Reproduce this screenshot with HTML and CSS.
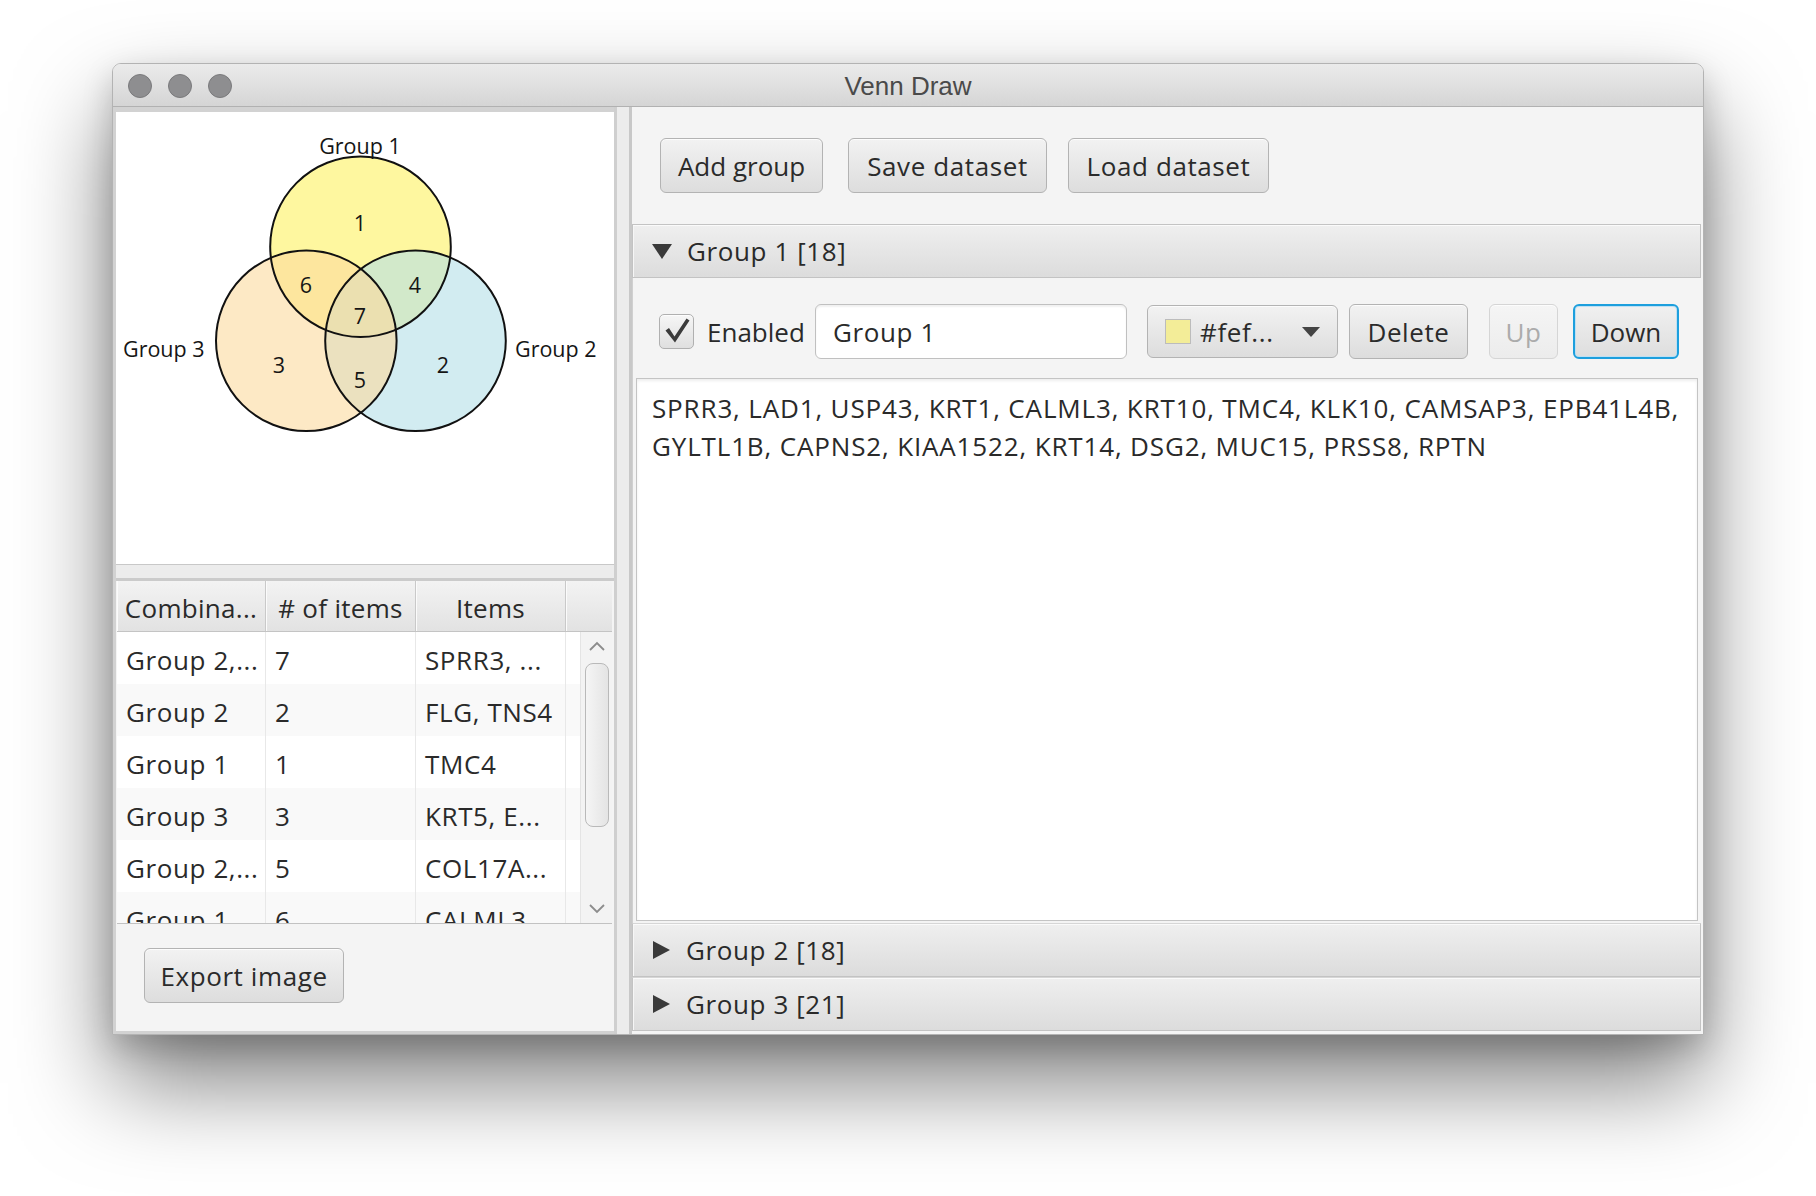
FILE: index.html
```html
<!DOCTYPE html>
<html>
<head>
<meta charset="utf-8">
<title>Venn Draw</title>
<link rel="stylesheet" href="styles.css">
</head>
<body>
<div class="stage">
  <div class="window">
    <div class="titlebar">
      <div class="lights">
        <span class="light"></span><span class="light"></span><span class="light"></span>
      </div>
      <div class="title">Venn Draw</div>
    </div>
    <div class="content">
      <div class="left">
        <div class="venn-pane">
          <svg class="venn" width="498" height="452" viewBox="0 0 498 452">
            <circle cx="244.5" cy="134.7" r="90.3" fill="#fef15f" fill-opacity="0.6"/>
            <circle cx="299.5" cy="228.8" r="90.3" fill="#b4dfe7" fill-opacity="0.6"/>
            <circle cx="190.3" cy="228.8" r="90.3" fill="#fcdb9f" fill-opacity="0.6"/>
            <circle cx="244.5" cy="134.7" r="90.3" fill="none" stroke="#111" stroke-width="2"/>
            <circle cx="299.5" cy="228.8" r="90.3" fill="none" stroke="#111" stroke-width="2"/>
            <circle cx="190.3" cy="228.8" r="90.3" fill="none" stroke="#111" stroke-width="2"/>
            <g class="vlabel">
              <text x="244" y="42" text-anchor="middle">Group 1</text>
              <text x="7" y="245">Group 3</text>
              <text x="399" y="245">Group 2</text>
              <text x="244" y="119" text-anchor="middle">1</text>
              <text x="190" y="181" text-anchor="middle">6</text>
              <text x="299" y="181" text-anchor="middle">4</text>
              <text x="244" y="212" text-anchor="middle">7</text>
              <text x="163" y="261" text-anchor="middle">3</text>
              <text x="327" y="261" text-anchor="middle">2</text>
              <text x="244" y="276" text-anchor="middle">5</text>
            </g>
          </svg>
        </div>
        <div class="hdivider"></div>
        <div class="lower">
          <div class="table">
            <div class="thead">
              <div class="th c1">Combina...</div>
              <div class="th c2"># of items</div>
              <div class="th c3">Items</div>
              <div class="th c4"></div>
            </div>
            <div class="tbody">
              <div class="rows">
                <div class="row"><div class="td c1">Group 2,...</div><div class="td c2">7</div><div class="td c3">SPRR3, ...</div><div class="td cf"></div></div>
                <div class="row alt"><div class="td c1">Group 2</div><div class="td c2">2</div><div class="td c3">FLG, TNS4</div><div class="td cf"></div></div>
                <div class="row"><div class="td c1">Group 1</div><div class="td c2">1</div><div class="td c3">TMC4</div><div class="td cf"></div></div>
                <div class="row alt"><div class="td c1">Group 3</div><div class="td c2">3</div><div class="td c3">KRT5, E...</div><div class="td cf"></div></div>
                <div class="row"><div class="td c1">Group 2,...</div><div class="td c2">5</div><div class="td c3">COL17A...</div><div class="td cf"></div></div>
                <div class="row alt"><div class="td c1">Group 1</div><div class="td c2">6</div><div class="td c3">CALML3</div><div class="td cf"></div></div>
              </div>
              <div class="vscroll">
                <div class="sarrow"><svg width="16" height="10" viewBox="0 0 16 10"><polyline points="1,9 8,2 15,9" fill="none" stroke="#8c8c8c" stroke-width="1.8"/></svg></div>
                <div class="strack"><div class="thumb"></div></div>
                <div class="sarrow"><svg width="16" height="10" viewBox="0 0 16 10"><polyline points="1,1 8,8 15,1" fill="none" stroke="#8c8c8c" stroke-width="1.8"/></svg></div>
              </div>
            </div>
          </div>
          <div class="export-bar">
            <button class="btn export">Export image</button>
          </div>
        </div>
      </div>
      <div class="vdivider"></div>
      <div class="right">
        <div class="toolbar">
          <button class="btn add">Add group</button>
          <button class="btn save">Save dataset</button>
          <button class="btn load">Load dataset</button>
        </div>
        <div class="accordion">
          <div class="tp-head">
            <svg class="arrow-down" width="20" height="15" viewBox="0 0 20 15"><polygon points="0,0 20,0 10,15" fill="#3a3a3a"/></svg>
            <span>Group 1 [18]</span>
          </div>
          <div class="tp-content">
            <div class="controls">
              <div class="checkbox">
                <svg width="35" height="35" viewBox="0 0 35 35"><path d="M6.5 16.5 L10 14 L15.5 22.5 L27.5 4.5 L30.5 6.5 L16 28.5 Z" fill="#3b3b3b"/></svg>
              </div>
              <div class="cb-label">Enabled</div>
              <div class="textfield">Group 1</div>
              <div class="btn colorpicker">
                <span class="swatch"></span>
                <span class="cp-text">#fef...</span>
                <svg class="cp-arrow" width="18" height="10" viewBox="0 0 18 10"><polygon points="0,0 18,0 9,10" fill="#444"/></svg>
              </div>
              <button class="btn delete">Delete</button>
              <button class="btn up" disabled>Up</button>
              <button class="btn down">Down</button>
            </div>
            <div class="textarea">SPRR3, LAD1, USP43, KRT1, CALML3, KRT10, TMC4, KLK10, CAMSAP3, EPB41L4B,<br>GYLTL1B, CAPNS2, KIAA1522, KRT14, DSG2, MUC15, PRSS8, RPTN</div>
          </div>
          <div class="tp-head collapsed">
            <svg class="arrow-right" width="17" height="18" viewBox="0 0 17 18"><polygon points="0,0 17,9 0,18" fill="#3a3a3a"/></svg>
            <span>Group 2 [18]</span>
          </div>
          <div class="tp-head collapsed last">
            <svg class="arrow-right" width="17" height="18" viewBox="0 0 17 18"><polygon points="0,0 17,9 0,18" fill="#3a3a3a"/></svg>
            <span>Group 3 [21]</span>
          </div>
        </div>
      </div>
    </div>
  </div>
</div>
</body>
</html>
```

FILE: styles.css
```css
* { box-sizing: border-box; }

html, body {
  margin: 0;
  padding: 0;
  background: #ffffff;
  width: 1816px;
  height: 1196px;
  overflow: hidden;
  font-family: "Open Sans", "Noto Sans", sans-serif;
  letter-spacing: 0.6px;
}

.stage {
  padding: 63px 0 0 112px;
}

.window {
  width: 1592px;
  height: 972px;
  border: 1px solid #b3b3b3;
  border-radius: 9px 9px 0 0;
  background: #f4f4f4;
  box-shadow: 0 48px 95px rgba(0, 0, 0, 0.5), 0 12px 30px rgba(0, 0, 0, 0.18);
  display: flex;
  flex-direction: column;
  overflow: hidden;
}

/* title bar */
.titlebar {
  height: 43px;
  flex: 0 0 43px;
  border-bottom: 1px solid #b1b1b1;
  background: linear-gradient(#ebebeb, #d5d5d5);
  display: flex;
  align-items: center;
  position: relative;
}

.lights {
  display: flex;
  gap: 16px;
  padding: 1px 0 0 15px;
}

.light {
  width: 24px;
  height: 24px;
  border-radius: 50%;
  background: #8e8e90;
  border: 1px solid #7a7a7c;
}

.title {
  position: absolute;
  left: 0;
  right: 0;
  top: 2px;
  bottom: 0;
  display: flex;
  align-items: center;
  justify-content: center;
  font-family: "Liberation Sans", Arial, sans-serif;
  font-size: 26px;
  letter-spacing: 0;
  color: #4a4a4a;
}

.content {
  display: flex;
  height: 927px;
}

/* left side */
.left {
  width: 501px;
  flex: 0 0 501px;
  padding: 5px 0 3px 3px;
  background: #d2d2d2;
  display: flex;
  flex-direction: column;
}

.venn-pane {
  height: 453px;
  flex: 0 0 453px;
  background: #ffffff;
  border-bottom: 1px solid #c8c8c8;
}

.venn { display: block; }

.vlabel text {
  font-family: "Open Sans", sans-serif;
  font-size: 21.5px;
  letter-spacing: 0;
  fill: #151515;
}

.hdivider {
  height: 16px;
  flex: 0 0 16px;
  background: #ececec;
  border-bottom: 3px solid #cbcbcb;
}

.lower {
  flex: 1;
  width: 498px;
  display: flex;
  flex-direction: column;
  background: #f4f4f4;
}

.table {
  margin-left: 1px;
  width: 495px;
  height: 343px;
  flex: 0 0 343px;
  border-bottom: 1px solid #c2c2c2;
  background: #ffffff;
  display: flex;
  flex-direction: column;
}

.thead {
  height: 51px;
  flex: 0 0 51px;
  display: flex;
  background: linear-gradient(#f3f3f3, #e2e2e2);
  border-bottom: 1px solid #c4c4c4;
}

.th {
  height: 100%;
  border-right: 1px solid #c9c9c9;
  box-shadow: inset 1px 0 0 #fbfbfb;
  padding-top: 3px;
  display: flex;
  align-items: center;
  justify-content: center;
  font-size: 26px;
  letter-spacing: 0.3px;
  color: #2a2a2a;
  white-space: nowrap;
  overflow: hidden;
}

.c1 { width: 149px; flex: 0 0 149px; }
.c2 { width: 150px; flex: 0 0 150px; }
.c3 { width: 150px; flex: 0 0 150px; }
.c4 { flex: 1; border-right: none; }
.cf { flex: 1; }

.tbody {
  flex: 1;
  display: flex;
  overflow: hidden;
}

.rows {
  width: 463px;
  flex: 0 0 463px;
  overflow: hidden;
}

.row {
  height: 52px;
  display: flex;
  background: #ffffff;
}

.row.alt { background: #f9f9f9; }

.td {
  height: 100%;
  border-right: 1px solid #e8e8e8;
  padding: 3px 0 0 9px;
  display: flex;
  align-items: center;
  font-size: 26px;
  color: #2a2a2a;
  white-space: nowrap;
  overflow: hidden;
}

.td.cf { border-right: none; padding: 0; }

.vscroll {
  flex: 1;
  display: flex;
  flex-direction: column;
  background: #f3f3f3;
  border-left: 1px solid #e4e4e4;
}

.sarrow {
  height: 28px;
  flex: 0 0 28px;
  display: flex;
  align-items: center;
  justify-content: center;
}

.strack {
  flex: 1;
  padding: 3px 3px 0 4px;
}

.thumb {
  height: 164px;
  border: 1px solid #b9b9b9;
  border-radius: 8px;
  background: linear-gradient(90deg, #f5f5f5, #e4e4e4);
}

.export-bar {
  flex: 1;
  padding: 24px 0 0 28px;
}

/* buttons */
.btn {
  height: 55px;
  margin: 0;
  padding: 0;
  border: 1px solid #b3b3b3;
  border-radius: 6px;
  background: linear-gradient(#f2f2f2, #dddddd);
  box-shadow: inset 0 1px 0 #fcfcfc;
  font-family: "Open Sans", "Noto Sans", sans-serif;
  font-size: 26px;
  letter-spacing: 0.6px;
  color: #2b2b2b;
  display: flex;
  align-items: center;
  justify-content: center;
}

.export { width: 200px; }

/* vertical divider */
.vdivider {
  width: 18px;
  flex: 0 0 18px;
  background: #ececec;
  border-left: 3px solid #cfcfcf;
  border-right: 3px solid #c8c8c8;
}

/* right side */
.right {
  flex: 1;
  display: flex;
  flex-direction: column;
  padding: 0 2px 3px 0;
  background: #f4f4f4;
}

.toolbar {
  height: 117px;
  flex: 0 0 117px;
  display: flex;
  align-items: center;
  padding-left: 28px;
}

.add { width: 163px; letter-spacing: 0; }
.save { width: 199px; margin-left: 25px; }
.load { width: 201px; margin-left: 21px; }

.accordion {
  flex: 1;
  display: flex;
  flex-direction: column;
}

.tp-head {
  height: 54px;
  flex: 0 0 54px;
  border: 1px solid #c3c3c3;
  background: linear-gradient(#efefef, #dcdcdc);
  box-shadow: inset 0 1px 0 #fafafa, inset 1px 0 0 #f6f6f6;
  display: flex;
  align-items: center;
  padding-left: 19px;
  font-size: 26px;
  color: #2a2a2a;
}

.tp-head .arrow-down { margin-right: 15px; }
.tp-head .arrow-right { margin-right: 16px; margin-left: 1px; }

.tp-head.collapsed { border-top: 1px solid #d6d6d6; }

.tp-content {
  flex: 1;
  display: flex;
  flex-direction: column;
  padding: 26px 3px 2px 3px;
  background: #f4f4f4;
  border-left: 1px solid #d0d0d0;
}

.controls {
  height: 55px;
  flex: 0 0 55px;
  display: flex;
  align-items: center;
  padding-left: 23px;
}

.checkbox {
  width: 35px;
  height: 35px;
  flex: 0 0 35px;
  border: 1px solid #b0b0b0;
  border-radius: 5px;
  background: linear-gradient(#f6f6f6, #dfdfdf);
  box-shadow: inset 0 1px 0 #fdfdfd;
  position: relative;
}

.checkbox svg {
  position: absolute;
  left: -1px;
  top: -1px;
}

.cb-label {
  width: 121px;
  flex: 0 0 121px;
  padding-left: 13px;
  font-size: 26px;
  letter-spacing: 0;
  color: #2a2a2a;
  white-space: nowrap;
}

.textfield {
  width: 312px;
  flex: 0 0 312px;
  height: 55px;
  border: 1px solid #c0c0c0;
  border-radius: 6px;
  background: #ffffff;
  box-shadow: inset 0 2px 2px rgba(0, 0, 0, 0.06);
  padding-left: 17px;
  display: flex;
  align-items: center;
  font-size: 26px;
  color: #2a2a2a;
}

.colorpicker {
  width: 191px;
  flex: 0 0 191px;
  height: 53px;
  margin-left: 20px;
  justify-content: flex-start;
  padding: 0 17px 0 17px;
}

.swatch {
  width: 26px;
  height: 25px;
  flex: 0 0 26px;
  border: 1px solid #bcbcbc;
  background: #f3ed98;
  margin-right: 9px;
}

.cp-text { white-space: nowrap; }
.cp-arrow { margin-left: auto; }

.delete { width: 119px; flex: 0 0 119px; margin-left: 11px; }

.up {
  width: 69px;
  flex: 0 0 69px;
  margin-left: 21px;
  color: #ababab;
  border-color: #d5d5d5;
  background: linear-gradient(#f5f5f5, #ececec);
}

.down {
  width: 106px;
  flex: 0 0 106px;
  margin-left: 15px;
  border: 2px solid #1d9fdd;
  box-shadow: inset 0 0 0 1px #bfe0f3;
  background: linear-gradient(#f0f0f0, #dedede);
  letter-spacing: 0;
}

.textarea {
  flex: 1;
  margin-top: 19px;
  background: #ffffff;
  border: 1px solid #c4c4c4;
  box-shadow: inset 0 2px 3px rgba(0, 0, 0, 0.07);
  padding: 10px 15px;
  font-size: 26px;
  line-height: 38px;
  letter-spacing: 0.85px;
  color: #2a2a2a;
  white-space: nowrap;
  overflow: hidden;
}
```
